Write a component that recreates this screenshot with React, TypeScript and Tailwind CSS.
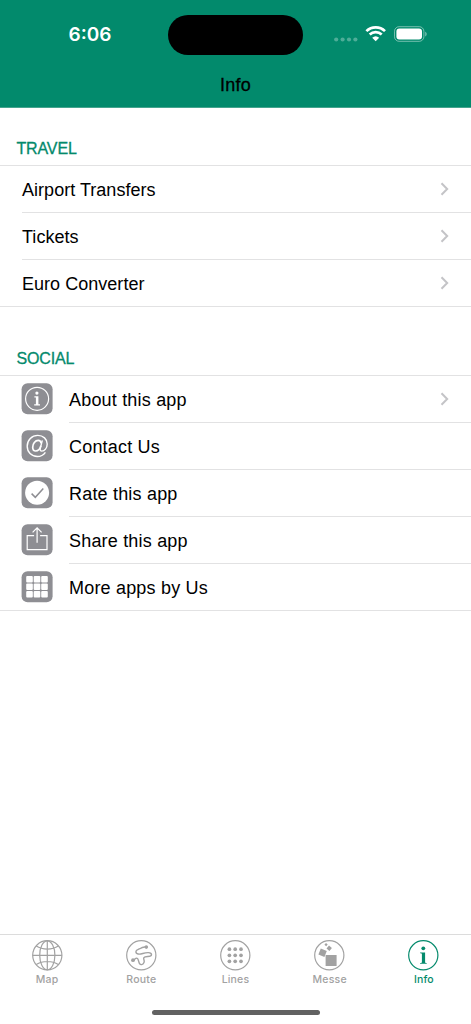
import React from "react";

interface Row {
  label: string;
  icon?: React.ReactNode;
  chevron?: boolean;
}

interface Tab {
  label: string;
  icon: React.ReactNode;
  active?: boolean;
}

const travelRows: Row[] = [
  { label: "Airport Transfers", chevron: true },
  { label: "Tickets", chevron: true },
  { label: "Euro Converter", chevron: true },
];

const socialRows: Row[] = [
  {
    label: "About this app",
    chevron: true,
    icon: (
      <>
        <circle cx="15.5" cy="15.5" r="11.5" />
        <circle cx="15.3" cy="9.8" r="1.6" fill="white" stroke="none" />
        <path d="M12.8 13h4v8h1.6v1.2h-5.8V21h1.7v-6.8h-1.5z" fill="white" stroke="none" />
      </>
    ),
  },
  {
    label: "Contact Us",
    icon: (
      <>
        <path d="M23.8 22C21.8 24.8 19 26.2 15.7 26.2 9.8 26.2 5.6 21.8 5.6 16 5.6 9.8 10.3 5.1 16.2 5.1c5.4 0 9.400 3.700 9.400 8.700 0 4.200-2.800 7-5.300 7-1.700 0-2-1.200-1.600-2.700l2-8" strokeWidth="1.4" />
        <path d="M19.6 13c-.3-1.900-1.400-2.900-3-2.900-3 0-5.500 3.400-5.500 6.800 0 2.300 1.100 3.800 3 3.800 2.400 0 4.400-2.300 5.200-5.200" strokeWidth="1.7" />
      </>
    ),
  },
  {
    label: "Rate this app",
    icon: (
      <>
        <circle cx="15.5" cy="15.5" r="12" fill="white" stroke="none" />
        <path d="M10 16.3l3.7 3.7 8-8.9" stroke="#8e8e93" strokeWidth="1.5" />
      </>
    ),
  },
  {
    label: "Share this app",
    icon: (
      <>
        <path d="M12.5 11.3H5.6v14h19.8v-14h-6.9" />
        <path d="M15.5 18.5V3.7M11 8.1l4.5-4.500L20 8.100" />
      </>
    ),
  },
  {
    label: "More apps by Us",
    icon: (
      <g fill="white" stroke="none">
        {[4.6, 12.1, 19.6].map((y) =>
          [4.6, 12.1, 19.6].map((x) => (
            <rect key={`${x}-${y}`} x={x} y={y} width="6.6" height="6.6" rx="1" />
          ))
        )}
      </g>
    ),
  },
];

const tabs: Tab[] = [
  {
    label: "Map",
    icon: (
      <>
        <ellipse cx="15.5" cy="15.5" rx="7.6" ry="14.5" />
        <path d="M15.5 1v29M1 15.5h29M4.5 6.3c6 4 16 4 22 0M4.5 24.7c6-4 16-4 22 0" />
      </>
    ),
  },
  {
    label: "Route",
    icon: (
      <>
        <circle cx="20.5" cy="7.3" r="1.8" fill="currentColor" stroke="none" />
        <circle cx="7.2" cy="20.4" r="1.9" fill="currentColor" stroke="none" />
        <path
          d="M20.5 7.3c-2.5-.5-4.500.2-6.500 1.600-1.500 1-3.900 1.300-3.900 3.100 0 2.700 3.600 2.700 6.900 1.700 3.200-1 8.700-1.700 8.700 1.200 0 3.200-6.200.700-7.600 2.900-1 1.700 1.100 2.600.100 5-1.100 2.500-3.500 2.700-4.600.7-1-1.800-.9-5.200-2.800-5.200-1.400 0-1.800 1.700-3.600 2.100"
          strokeWidth="1.4"
        />
      </>
    ),
  },
  {
    label: "Lines",
    icon: (
      <g fill="currentColor" stroke="none">
        {[9.4, 15.5, 21.5].map((y) =>
          [9.6, 15.4, 21.2].map((x) => <circle key={`${x}-${y}`} cx={x} cy={y} r="1.85" />)
        )}
      </g>
    ),
  },
  {
    label: "Messe",
    icon: (
      <g fill="currentColor" stroke="none">
        <rect x="11.8" y="15.2" width="11" height="11" />
        <path d="M7 8.7l6 2.600-2.400 6-6-2.600zM15.200 5.800l2.900 2.500-2.500 3-2.900-2.500zM12.200 3.200l1.700 1.500-1.500 1.800-1.800-1.600z" />
      </g>
    ),
  },
  {
    label: "Info",
    active: true,
    icon: (
      <g fill="currentColor" stroke="none">
        <circle cx="15.5" cy="8.5" r="1.9" />
        <path d="M12.3 12.6h5v9.8c0 .4.3.6 1.6.8v.7h-6.600v-.7c1.500-.2 1.800-.4 1.800-.8v-8c0-.6-.4-.9-1.800-1z" />
      </g>
    ),
  },
];

function StatusBar() {
  return (
    <div className="flex h-[70px] items-start text-white">
      <span className="ml-[68.5px] mt-[20px] w-[99.5px] font-['Inter',sans-serif] text-[19px] font-semibold leading-[30px]">
        6:06
      </span>
      <div className="mt-[15px] h-[40px] w-[135px] rounded-full bg-black" />
      <svg className="ml-[30px] mt-[24px]" width="96" height="20" viewBox="0 0 96 20" fill="none">
        <g fill="white" fillOpacity="0.3">
          <circle cx="3.2" cy="15.5" r="2.1" />
          <circle cx="9.6" cy="15.5" r="2.1" />
          <circle cx="16" cy="15.5" r="2.1" />
          <circle cx="22.4" cy="15.5" r="2.1" />
        </g>
        <path d="M33.4 7.1a13.4 13.4 0 0 1 18.6 0M36.7 10.6a8.700 8.700 0 0 1 12 0" stroke="white" strokeWidth="2.7" />
        <path d="M39.2 13.8a5.2 5.2 0 0 1 7 0l-3.5 3.500z" fill="white" />
        <rect x="61.5" y="2.7" width="29.4" height="14.6" rx="4.6" stroke="white" strokeOpacity="0.45" />
        <rect x="63.4" y="4.6" width="25.6" height="10.8" rx="3" fill="white" />
        <path d="M92.2 7.7c2 .7 2 4 0 4.700z" fill="white" fillOpacity="0.45" />
      </svg>
    </div>
  );
}

function Section({ title, rows }: { title: string; rows: Row[] }) {
  return (
    <section>
      <h2 className="pl-[16.5px] pt-px text-[16px] font-normal leading-[20px] tracking-[-0.15px] text-[#048a6c] [-webkit-text-stroke:0.3px_#048a6c]">
        {title}
      </h2>
      <ul className="mt-[6px] border-y border-[#e2e2e3]">
        {rows.map((row, i) => (
          <li key={row.label} className="flex h-[47px] pl-[22px] last:h-[46px]">
            {row.icon && (
              <svg className="mr-4 mt-[7px] shrink-0" width="31" height="32" viewBox="0.4 -0.3 31 32" fill="none" stroke="white" strokeWidth="1.2" overflow="visible">
                <rect width="31" height="31" rx="6" fill="#8e8e93" stroke="none" />
                {row.icon}
              </svg>
            )}
            <div
              className={`flex flex-1 items-center justify-between pr-[22px] ${
                i < rows.length - 1 ? "border-b border-[#e2e2e3]" : ""
              }`}
            >
              <span
                className={`whitespace-nowrap pt-[2px] text-[18px] leading-[24px] text-black ${
                  row.icon ? "tracking-[0.19px]" : "tracking-[0.03px]"
                }`}
              >
                {row.label}
              </span>
              {row.chevron && (
                <svg width="9" height="14" viewBox="0 0 9 14" fill="none" stroke="#c4c4c7" strokeWidth="2">
                  <path d="M1.5 1.2L7.2 7l-5.700 5.800" />
                </svg>
              )}
            </div>
          </li>
        ))}
      </ul>
    </section>
  );
}

function TabBar() {
  return (
    <nav className="flex h-[90px] flex-col border-t border-[#dcdcdc]">
      <div className="grid grid-cols-5">
        {tabs.map((tab) => (
          <div
            key={tab.label}
            className={`flex flex-col items-center pt-[5px] ${
              tab.active ? "text-[#048a6c]" : "text-[#a2a2a2]"
            }`}
          >
            <svg width="31" height="31" viewBox="0.2 0.2 31 31" fill="none" stroke="currentColor" strokeWidth="1.2" overflow="visible">
              <circle cx="15.5" cy="15.5" r="14.6" />
              {tab.icon}
            </svg>
            <span className="mt-px font-['Inter',sans-serif] text-[10.5px] font-medium leading-[16px] tracking-[0.2px]">
              {tab.label}
            </span>
          </div>
        ))}
      </div>
      <div className="mx-auto mb-[9px] mt-auto h-[5px] w-[168px] rounded-full bg-[#626262]" />
    </nav>
  );
}

export default function App() {
  return (
    <div className="flex h-[1024px] w-[471px] flex-col overflow-hidden bg-white font-['Liberation_Sans',Arial,sans-serif]">
      <header className="h-[108px] border-b border-[#45a48e] bg-[#028a6c]">
        <StatusBar />
        <h1 className="mt-[3px] text-center text-[18px] font-normal leading-[24px] tracking-[0.3px] text-black [-webkit-text-stroke:0.3px_black]">
          Info
        </h1>
      </header>
      <main className="flex flex-1 flex-col gap-[41px] pt-[30px]">
        <Section title="TRAVEL" rows={travelRows} />
        <Section title="SOCIAL" rows={socialRows} />
      </main>
      <TabBar />
    </div>
  );
}
